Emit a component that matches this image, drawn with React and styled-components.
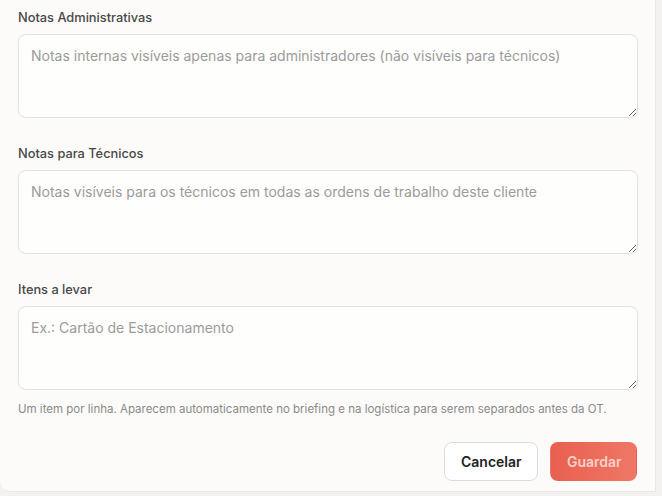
import React from "react";
import styled, { createGlobalStyle } from "styled-components";

const Global = createGlobalStyle`
  html, body { margin: 0; padding: 0; background: #f3f2f0; }
  body { font-family: Inter, "Noto Sans", sans-serif; }
  * { box-sizing: border-box; }
`;

const Panel = styled.div`
  width: 656px;
  height: 492px;
  background: #fcfbf9;
  border-right: 1px solid #ebe9e6;
  border-bottom: 1px solid #ebe9e6;
  border-bottom-left-radius: 10px;
  padding: 10px 18px 0 18px;
  display: flex;
  flex-direction: column;
`;

const Field = styled.div`
  display: flex;
  flex-direction: column;
  margin-bottom: ${(p) => p.$mb || 0}px;
`;

const Label = styled.label`
  font-size: 12.8px;
  line-height: 16px;
  font-weight: 500;
  color: #484848;
  margin-bottom: 8px;
`;

const TextArea = styled.textarea`
  width: 620px;
  height: 84px;
  border: 1px solid #e3e1dd;
  border-radius: 8px;
  background: #fefefd;
  padding: 11px 12px 10px;
  font-family: Inter, "Noto Sans", sans-serif;
  font-size: 14px;
  line-height: 20px;
  color: #333;
  resize: vertical;
  outline: none;
  &::placeholder { color: #9b9b9b; }
`;

const Help = styled.p`
  margin: 12px 0 0 0;
  font-size: 11.5px;
  line-height: 14px;
  color: #8a8a8a;
  white-space: nowrap;
`;

const Actions = styled.div`
  display: flex;
  justify-content: flex-end;
  gap: 12px;
  margin-top: 26px;
`;

const Button = styled.button`
  height: 39px;
  border-radius: 8px;
  font-family: Inter, "Noto Sans", sans-serif;
  font-size: 14px;
  font-weight: 600;
  padding: 0 16px;
  cursor: pointer;
  border: 1px solid ${(p) => (p.$primary ? "transparent" : "#dedcd8")};
  background: ${(p) =>
    p.$primary ? "linear-gradient(90deg, #e9604f, #ef7766)" : "#ffffff"};
  color: ${(p) => (p.$primary ? "#fad0c8" : "#222222")};
  width: ${(p) => p.$w}px;
`;

export default function App() {
  return (
    <>
      <Global />
      <Panel>
        <Field $mb={28}>
          <Label>Notas Administrativas</Label>
          <TextArea placeholder="Notas internas visíveis apenas para administradores (não visíveis para técnicos)" />
        </Field>
        <Field $mb={28}>
          <Label>Notas para Técnicos</Label>
          <TextArea placeholder="Notas visíveis para os técnicos em todas as ordens de trabalho deste cliente" />
        </Field>
        <Field>
          <Label>Itens a levar</Label>
          <TextArea placeholder="Ex.: Cartão de Estacionamento" />
          <Help>
            Um item por linha. Aparecem automaticamente no briefing e na logística para serem separados antes da OT.
          </Help>
        </Field>
        <Actions>
          <Button $w={94}>Cancelar</Button>
          <Button $primary $w={87}>Guardar</Button>
        </Actions>
      </Panel>
    </>
  );
}
